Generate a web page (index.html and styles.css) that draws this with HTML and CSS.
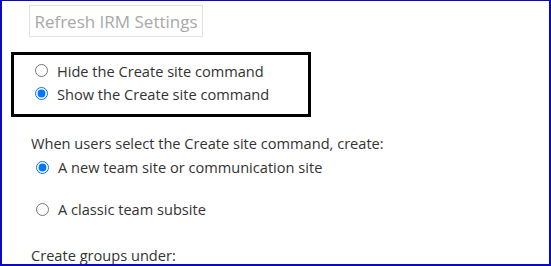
FILE: index.html
```html
<!DOCTYPE html>
<html>
<head>
<meta charset="utf-8">
<link rel="stylesheet" href="styles.css">
</head>
<body>
<div class="frame">
  <button class="btn" disabled>Refresh IRM Settings</button>
  <div class="box">
    <label class="opt"><input type="radio" name="cs"><span>Hide the Create site command</span></label>
    <label class="opt"><input type="radio" name="cs" checked><span>Show the Create site command</span></label>
  </div>
  <p class="lead">When users select the Create site command, create:</p>
  <label class="opt opt2 first"><input type="radio" name="kind" checked><span>A new team site or communication site</span></label>
  <label class="opt opt2 second"><input type="radio" name="kind"><span>A classic team subsite</span></label>
  <p class="lead last">Create groups under:</p>
</div>
</body>
</html>
```

FILE: styles.css
```css
html, body {
  margin: 0;
  padding: 0;
  background: #fff;
}
.frame {
  box-sizing: border-box;
  width: 551px;
  height: 266px;
  border-style: solid;
  border-color: #0a0ac4;
  border-width: 1px 2px 2px 2px;
  overflow: hidden;
  font-family: "Open Sans", "Noto Sans", sans-serif;
  font-size: 14.6px;
  color: #333;
}
.btn {
  display: block;
  box-sizing: border-box;
  margin: 4px 0 0 27px;
  width: 174px;
  height: 32px;
  padding: 0;
  background: #fff;
  border: 1px solid #e2e2e2;
  font-family: "Open Sans", "Noto Sans", sans-serif;
  font-size: 17px;
  color: #a8a8a8;
}
.box {
  box-sizing: border-box;
  margin: 15px 0 0 9px;
  width: 300px;
  height: 65px;
  border: 3px solid #000;
  padding: 4px 0 0 0;
}
.opt {
  display: flex;
  align-items: center;
  height: 23px;
}
.opt input {
  margin: 0 0 0 21px;
  width: 13px;
  height: 13px;
}
.opt span {
  margin-left: 9px;
}
.lead {
  margin: 16px 0 0 29px;
  line-height: 20px;
}
.opt2 {
  height: 20px;
}
.opt2 input {
  margin-left: 34px;
}
.opt2 span {
  margin-left: 9px;
}
.first {
  margin-top: 4px;
}
.second {
  margin-top: 22px;
}
.last {
  margin-top: 26px;
}
```
